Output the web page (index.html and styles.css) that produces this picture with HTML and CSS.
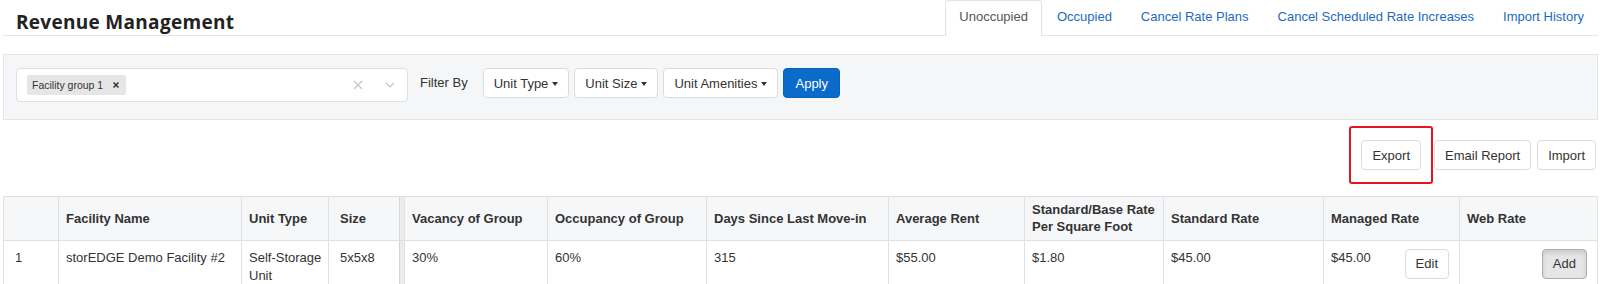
FILE: index.html
```html
<!DOCTYPE html>
<html lang="en">
<head>
<meta charset="utf-8">
<title>Revenue Management</title>
<link rel="stylesheet" href="styles.css">
</head>
<body>
<div class="page">
  <header class="page-header">
    <h1 class="page-title">Revenue Management</h1>
    <nav class="tabs">
      <a class="tab active">Unoccupied</a>
      <a class="tab">Occupied</a>
      <a class="tab">Cancel Rate Plans</a>
      <a class="tab">Cancel Scheduled Rate Increases</a>
      <a class="tab">Import History</a>
    </nav>
  </header>

  <section class="filter-panel">
    <div class="select">
      <div class="select-values">
        <span class="chip"><span class="chip-label">Facility group 1</span><span class="chip-remove"><svg width="6" height="6" viewBox="0 0 6 6"><path d="M0.5 0.5L5.5 5.5M5.5 0.5L0.5 5.5" stroke="#333" stroke-width="1.5"/></svg></span></span>
      </div>
      <div class="select-indicators">
        <svg class="ind" width="10" height="10" viewBox="0 0 10 10"><path d="M1 1L9 9M9 1L1 9" stroke="#c6c6c6" stroke-width="1.3"/></svg>
        <svg class="ind" width="10" height="6" viewBox="0 0 10 6"><path d="M1 1L5 5L9 1" fill="none" stroke="#c6c6c6" stroke-width="1.2"/></svg>
      </div>
    </div>
    <span class="filter-label">Filter By</span>
    <button class="btn btn-dropdown">Unit Type<span class="caret"></span></button>
    <button class="btn btn-dropdown">Unit Size<span class="caret"></span></button>
    <button class="btn btn-dropdown">Unit Amenities<span class="caret"></span></button>
    <button class="btn btn-primary">Apply</button>
  </section>

  <div class="toolbar">
    <span class="highlight"><button class="btn">Export</button></span>
    <button class="btn">Email Report</button>
    <button class="btn btn-import">Import</button>
  </div>

  <table class="grid">
    <thead>
      <tr>
        <th class="c-idx"></th>
        <th class="c-name">Facility Name</th>
        <th class="c-type">Unit Type</th>
        <th class="c-size sep">Size</th>
        <th class="c-vac">Vacancy of Group</th>
        <th class="c-occ">Occupancy of Group</th>
        <th class="c-days">Days Since Last Move-in</th>
        <th class="c-avg">Average Rent</th>
        <th class="c-base">Standard/Base Rate Per Square Foot</th>
        <th class="c-std">Standard Rate</th>
        <th class="c-man">Managed Rate</th>
        <th class="c-web">Web Rate</th>
      </tr>
    </thead>
    <tbody>
      <tr>
        <td class="c-idx">1</td>
        <td>storEDGE Demo Facility #2</td>
        <td>Self-Storage Unit</td>
        <td class="c-size sep">5x5x8</td>
        <td>30%</td>
        <td>60%</td>
        <td>315</td>
        <td>$55.00</td>
        <td>$1.80</td>
        <td>$45.00</td>
        <td><div class="cell-split"><span>$45.00</span><button class="btn btn-cell">Edit</button></div></td>
        <td><div class="cell-split cell-end"><button class="btn btn-cell btn-active">Add</button></div></td>
      </tr>
    </tbody>
  </table>
</div>
</body>
</html>
```

FILE: styles.css
```css
body {
  margin: 0;
  font-family: "Liberation Sans", Arial, sans-serif;
  font-size: 13px;
  color: #333;
  background: #fff;
}

.page {
  margin: 0 2px 0 3px;
}

/* Header + tabs */
.page-header {
  display: flex;
  justify-content: space-between;
  align-items: flex-start;
  height: 35px;
  border-bottom: 1px solid #e6e6e6;
}

.page-title {
  margin: 0;
  padding: 10px 0 0 13px;
  font-family: "Open Sans", sans-serif;
  font-weight: 700;
  font-size: 19px;
  line-height: 24px;
  letter-spacing: 0.3px;
  color: #222;
}

.tabs {
  display: flex;
}

.tab {
  display: block;
  box-sizing: border-box;
  height: 36px;
  margin-left: 1px;
  padding: 0 13px;
  line-height: 32px;
  border: 1px solid transparent;
  border-bottom: 0;
  border-radius: 4px 4px 0 0;
  color: #1a6bbf;
  text-decoration: none;
  white-space: nowrap;
}

.tab.active {
  color: #555;
  background: #fff;
  border-color: #e2e2e2;
}

/* Filter panel */
.filter-panel {
  margin-top: 18px;
  display: flex;
  align-items: flex-start;
  padding: 13px 12px 17px;
  background: #f5f6f8;
  border: 1px solid #e3e5e8;
}

.select {
  box-sizing: border-box;
  width: 392px;
  height: 34px;
  display: flex;
  align-items: center;
  padding: 0 12px 0 10px;
  background: #fff;
  border: 1px solid #dedede;
  border-radius: 4px;
}

.select-values {
  flex: 1;
  display: flex;
}

.chip {
  display: flex;
  align-items: center;
  height: 20px;
  background: #e6e6e6;
  border-radius: 2px;
  font-size: 10.5px;
  color: #333;
}

.chip-label {
  padding-left: 5px;
}

.chip-remove {
  display: flex;
  padding: 0 7px 0 10px;
}

.select-indicators {
  display: flex;
  align-items: center;
  gap: 22px;
}

.ind {
  display: block;
}

.filter-label {
  margin: 0 15px 0 12px;
  line-height: 30px;
  color: #333;
}

.btn {
  box-sizing: border-box;
  height: 30px;
  padding: 0 10px;
  border: 1px solid #dcdcdc;
  border-radius: 4px;
  background: #fff;
  font: inherit;
  color: #333;
  white-space: nowrap;
  cursor: pointer;
}

.btn-dropdown {
  padding: 0 10px;
}

.filter-panel .btn + .btn {
  margin-left: 5px;
}

.caret {
  display: inline-block;
  width: 0;
  height: 0;
  margin-left: 4px;
  vertical-align: middle;
  border-top: 4px solid #333;
  border-left: 3.5px solid transparent;
  border-right: 3.5px solid transparent;
}

.btn-primary {
  padding: 0 11px;
  background: #0b6bcb;
  border-color: #0a62bb;
  color: #fff;
}

/* Toolbar */
.toolbar {
  display: flex;
  justify-content: flex-end;
  margin-top: 20px;
  padding-right: 2px;
}

.highlight {
  position: relative;
  display: flex;
  margin-right: 13px;
}

.highlight::after {
  content: "";
  position: absolute;
  top: -14px;
  bottom: -14px;
  left: -12px;
  right: -12px;
  border: 2px solid #e8141b;
  border-radius: 3px;
  pointer-events: none;
}

.btn-import {
  margin-left: 6px;
}

/* Table */
.grid {
  margin-top: 26px;
  width: 1595px;
  table-layout: fixed;
  border-collapse: separate;
  border-spacing: 0;
  border-top: 1px solid #e1e1e1;
  border-left: 1px solid #e1e1e1;
}

.grid th,
.grid td {
  box-sizing: border-box;
  border-right: 1px solid #e1e1e1;
  border-bottom: 1px solid #e1e1e1;
  text-align: left;
}

.grid th {
  background: #f6f7f9;
  font-weight: 700;
  line-height: 17px;
  padding: 4px 2px 5px 7px;
  vertical-align: middle;
  color: #333;
}

.grid td {
  line-height: 18px;
  padding: 8px 5px 8px 7px;
  vertical-align: top;
}

.grid .c-idx,
.grid .c-size {
  padding-left: 11px;
}

.grid .sep {
  box-shadow: inset -4px 0 0 #ececec, inset -5px 0 0 #d6d6d6;
}

.c-idx { width: 55px; }
.c-name { width: 183px; }
.c-type { width: 87px; }
.c-size { width: 76px; }
.c-vac { width: 143px; }
.c-occ { width: 159px; }
.c-days { width: 182px; }
.c-avg { width: 136px; }
.c-base { width: 139px; }
.c-std { width: 160px; }
.c-man { width: 136px; }
.c-web { width: 138px; }

.cell-split {
  display: flex;
  justify-content: space-between;
  align-items: flex-start;
}

.cell-end {
  justify-content: flex-end;
}

.btn-cell {
  margin-right: 5px;
}

.btn-active {
  background: #e6e6e6;
  border-color: #adadad;
  box-shadow: inset 0 3px 5px rgba(0, 0, 0, 0.125);
}
```
